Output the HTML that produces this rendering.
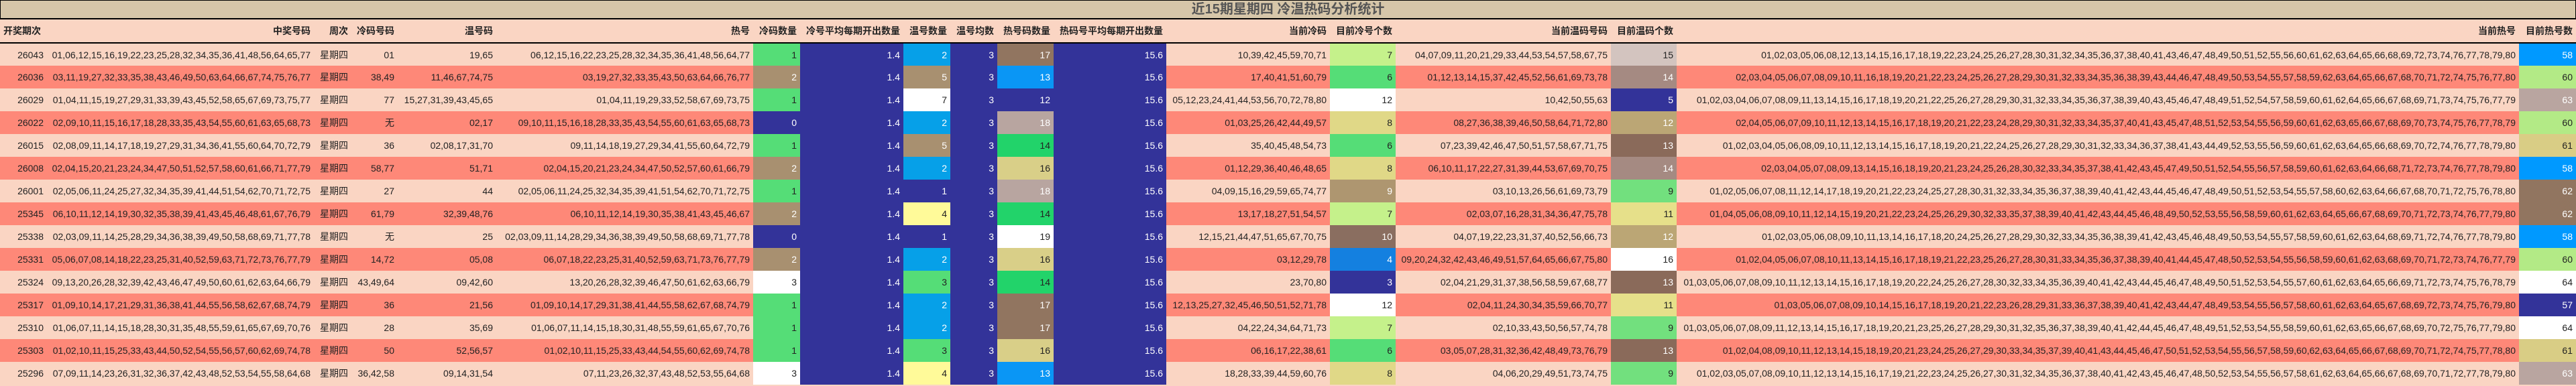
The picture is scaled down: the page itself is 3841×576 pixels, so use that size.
<!DOCTYPE html>
<html><head><meta charset="utf-8">
<style>
html,body{margin:0;padding:0;background:#fad5c3;}
body{width:3841px;height:576px;overflow:hidden;font-family:"Liberation Sans","Noto Sans CJK SC",sans-serif;font-size:14px;color:#222;}
.title{height:26px;background:#d6c6a9;border:1px solid #000;border-bottom:2px solid #000;text-align:center;font-size:20px;font-weight:bold;color:#555;line-height:26px;box-sizing:content-box;width:3839px;}
table{border-collapse:collapse;table-layout:fixed;width:3841px;}
td,th{padding:0 5px;text-align:right;white-space:nowrap;overflow:hidden;height:34px;box-sizing:border-box;}
th{height:35px;font-weight:bold;background:#fad5c3;border-bottom:2px solid #000;}
tr.a td{background:#fad5c3;}
tr.b td{background:#fe8878;}
tr td.nv{background:#333399;color:#fff;}
tr td.gr{background:#55dd77;}
tr td.tn{background:#a89070;color:#fff;}
tr td.bl{background:#06a0e8;color:#fff;}
tr td.bl2{background:#0a96f5;color:#fff;}
tr td.br{background:#917560;color:#fff;}
tr td.gp{background:#b8a5a0;color:#fff;}
tr td.g2{background:#22d36a;}
tr td.kh{background:#d9cf88;}
tr td.ye{background:#fffa99;}
tr td.wh{background:#fff;}
tr td.lg{background:#c5f18b;}
tr td.k2{background:#e0d887;}
tr td.t2{background:#ae9670;color:#fff;}
tr td.b3{background:#8a6e60;color:#fff;}
tr td.bb{background:#1480e0;color:#fff;}
tr td.p15{background:#d3c4bf;}
tr td.p14{background:#a58a82;color:#fff;}
tr td.p12{background:#bba675;color:#fff;}
tr td.p13{background:#8a6a5a;color:#fff;}
tr td.p9{background:#72e07e;}
tr td.p11{background:#e6e08a;}
tr td.h58{background:#0099ff;color:#fff;}
tr td.h60{background:#b3ea86;}
tr td.h63{background:#b9a5a0;color:#fff;}
tr td.h61{background:#d9cd85;}
tr td.h62{background:#917560;color:#fff;}
</style></head><body>
<div class="title">近15期星期四 冷温热码分析统计</div>
<table>
<colgroup>
<col style="width:70px"><col style="width:398px"><col style="width:56px"><col style="width:69px"><col style="width:147px"><col style="width:383px"><col style="width:70px"><col style="width:154px"><col style="width:70px"><col style="width:70px"><col style="width:84px"><col style="width:168px"><col style="width:244px"><col style="width:98px"><col style="width:321px"><col style="width:98px"><col style="width:1256px"><col style="width:85px">
</colgroup>
<tr><th style="text-align:left">开奖期次</th><th>中奖号码</th><th>周次</th><th>冷码号码</th><th>温号码</th><th>热号</th><th>冷码数量</th><th>冷号平均每期开出数量</th><th>温号数量</th><th>温号均数</th><th>热号码数量</th><th>热码号平均每期开出数量</th><th>当前冷码</th><th>目前冷号个数</th><th>当前温码号码</th><th>目前温码个数</th><th>当前热号</th><th>目前热号数</th></tr>
<tr class="a"><td>26043</td><td>01,06,12,15,16,19,22,23,25,28,32,34,35,36,41,48,56,64,65,77</td><td>星期四</td><td>01</td><td>19,65</td><td>06,12,15,16,22,23,25,28,32,34,35,36,41,48,56,64,77</td><td class="gr">1</td><td class="nv">1.4</td><td class="bl">2</td><td class="nv">3</td><td class="br">17</td><td class="nv">15.6</td><td>10,39,42,45,59,70,71</td><td class="lg">7</td><td>04,07,09,11,20,21,29,33,44,53,54,57,58,67,75</td><td class="p15">15</td><td>01,02,03,05,06,08,12,13,14,15,16,17,18,19,22,23,24,25,26,27,28,30,31,32,34,35,36,37,38,40,41,43,46,47,48,49,50,51,52,55,56,60,61,62,63,64,65,66,68,69,72,73,74,76,77,78,79,80</td><td class="h58">58</td></tr>
<tr class="b"><td>26036</td><td>03,11,19,27,32,33,35,38,43,46,49,50,63,64,66,67,74,75,76,77</td><td>星期四</td><td>38,49</td><td>11,46,67,74,75</td><td>03,19,27,32,33,35,43,50,63,64,66,76,77</td><td class="tn">2</td><td class="nv">1.4</td><td class="tn">5</td><td class="nv">3</td><td class="bl2">13</td><td class="nv">15.6</td><td>17,40,41,51,60,79</td><td class="gr">6</td><td>01,12,13,14,15,37,42,45,52,56,61,69,73,78</td><td class="p14">14</td><td>02,03,04,05,06,07,08,09,10,11,16,18,19,20,21,22,23,24,25,26,27,28,29,30,31,32,33,34,35,36,38,39,43,44,46,47,48,49,50,53,54,55,57,58,59,62,63,64,65,66,67,68,70,71,72,74,75,76,77,80</td><td class="h60">60</td></tr>
<tr class="a"><td>26029</td><td>01,04,11,15,19,27,29,31,33,39,43,45,52,58,65,67,69,73,75,77</td><td>星期四</td><td>77</td><td>15,27,31,39,43,45,65</td><td>01,04,11,19,29,33,52,58,67,69,73,75</td><td class="gr">1</td><td class="nv">1.4</td><td class="wh">7</td><td class="nv">3</td><td class="nv">12</td><td class="nv">15.6</td><td>05,12,23,24,41,44,53,56,70,72,78,80</td><td class="wh">12</td><td>10,42,50,55,63</td><td class="nv">5</td><td>01,02,03,04,06,07,08,09,11,13,14,15,16,17,18,19,20,21,22,25,26,27,28,29,30,31,32,33,34,35,36,37,38,39,40,43,45,46,47,48,49,51,52,54,57,58,59,60,61,62,64,65,66,67,68,69,71,73,74,75,76,77,79</td><td class="h63">63</td></tr>
<tr class="b"><td>26022</td><td>02,09,10,11,15,16,17,18,28,33,35,43,54,55,60,61,63,65,68,73</td><td>星期四</td><td>无</td><td>02,17</td><td>09,10,11,15,16,18,28,33,35,43,54,55,60,61,63,65,68,73</td><td class="nv">0</td><td class="nv">1.4</td><td class="bl">2</td><td class="nv">3</td><td class="gp">18</td><td class="nv">15.6</td><td>01,03,25,26,42,44,49,57</td><td class="k2">8</td><td>08,27,36,38,39,46,50,58,64,71,72,80</td><td class="p12">12</td><td>02,04,05,06,07,09,10,11,12,13,14,15,16,17,18,19,20,21,22,23,24,28,29,30,31,32,33,34,35,37,40,41,43,45,47,48,51,52,53,54,55,56,59,60,61,62,63,65,66,67,68,69,70,73,74,75,76,77,78,79</td><td class="h60">60</td></tr>
<tr class="a"><td>26015</td><td>02,08,09,11,14,17,18,19,27,29,31,34,36,41,55,60,64,70,72,79</td><td>星期四</td><td>36</td><td>02,08,17,31,70</td><td>09,11,14,18,19,27,29,34,41,55,60,64,72,79</td><td class="gr">1</td><td class="nv">1.4</td><td class="tn">5</td><td class="nv">3</td><td class="g2">14</td><td class="nv">15.6</td><td>35,40,45,48,54,73</td><td class="gr">6</td><td>07,23,39,42,46,47,50,51,57,58,67,71,75</td><td class="p13">13</td><td>01,02,03,04,05,06,08,09,10,11,12,13,14,15,16,17,18,19,20,21,22,24,25,26,27,28,29,30,31,32,33,34,36,37,38,41,43,44,49,52,53,55,56,59,60,61,62,63,64,65,66,68,69,70,72,74,76,77,78,79,80</td><td class="h61">61</td></tr>
<tr class="b"><td>26008</td><td>02,04,15,20,21,23,24,34,47,50,51,52,57,58,60,61,66,71,77,79</td><td>星期四</td><td>58,77</td><td>51,71</td><td>02,04,15,20,21,23,24,34,47,50,52,57,60,61,66,79</td><td class="tn">2</td><td class="nv">1.4</td><td class="bl">2</td><td class="nv">3</td><td class="kh">16</td><td class="nv">15.6</td><td>01,12,29,36,40,46,48,65</td><td class="k2">8</td><td>06,10,11,17,22,27,31,39,44,53,67,69,70,75</td><td class="p14">14</td><td>02,03,04,05,07,08,09,13,14,15,16,18,19,20,21,23,24,25,26,28,30,32,33,34,35,37,38,41,42,43,45,47,49,50,51,52,54,55,56,57,58,59,60,61,62,63,64,66,68,71,72,73,74,76,77,78,79,80</td><td class="h58">58</td></tr>
<tr class="a"><td>26001</td><td>02,05,06,11,24,25,27,32,34,35,39,41,44,51,54,62,70,71,72,75</td><td>星期四</td><td>27</td><td>44</td><td>02,05,06,11,24,25,32,34,35,39,41,51,54,62,70,71,72,75</td><td class="gr">1</td><td class="nv">1.4</td><td class="nv">1</td><td class="nv">3</td><td class="gp">18</td><td class="nv">15.6</td><td>04,09,15,16,29,59,65,74,77</td><td class="t2">9</td><td>03,10,13,26,56,61,69,73,79</td><td class="p9">9</td><td>01,02,05,06,07,08,11,12,14,17,18,19,20,21,22,23,24,25,27,28,30,31,32,33,34,35,36,37,38,39,40,41,42,43,44,45,46,47,48,49,50,51,52,53,54,55,57,58,60,62,63,64,66,67,68,70,71,72,75,76,78,80</td><td class="h62">62</td></tr>
<tr class="b"><td>25345</td><td>06,10,11,12,14,19,30,32,35,38,39,41,43,45,46,48,61,67,76,79</td><td>星期四</td><td>61,79</td><td>32,39,48,76</td><td>06,10,11,12,14,19,30,35,38,41,43,45,46,67</td><td class="tn">2</td><td class="nv">1.4</td><td class="ye">4</td><td class="nv">3</td><td class="g2">14</td><td class="nv">15.6</td><td>13,17,18,27,51,54,57</td><td class="lg">7</td><td>02,03,07,16,28,31,34,36,47,75,78</td><td class="p11">11</td><td>01,04,05,06,08,09,10,11,12,14,15,19,20,21,22,23,24,25,26,29,30,32,33,35,37,38,39,40,41,42,43,44,45,46,48,49,50,52,53,55,56,58,59,60,61,62,63,64,65,66,67,68,69,70,71,72,73,74,76,77,79,80</td><td class="h62">62</td></tr>
<tr class="a"><td>25338</td><td>02,03,09,11,14,25,28,29,34,36,38,39,49,50,58,68,69,71,77,78</td><td>星期四</td><td>无</td><td>25</td><td>02,03,09,11,14,28,29,34,36,38,39,49,50,58,68,69,71,77,78</td><td class="nv">0</td><td class="nv">1.4</td><td class="nv">1</td><td class="nv">3</td><td class="wh">19</td><td class="nv">15.6</td><td>12,15,21,44,47,51,65,67,70,75</td><td class="b3">10</td><td>04,07,19,22,23,31,37,40,52,56,66,73</td><td class="p12">12</td><td>01,02,03,05,06,08,09,10,11,13,14,16,17,18,20,24,25,26,27,28,29,30,32,33,34,35,36,38,39,41,42,43,45,46,48,49,50,53,54,55,57,58,59,60,61,62,63,64,68,69,71,72,74,76,77,78,79,80</td><td class="h58">58</td></tr>
<tr class="b"><td>25331</td><td>05,06,07,08,14,18,22,23,25,31,40,52,59,63,71,72,73,76,77,79</td><td>星期四</td><td>14,72</td><td>05,08</td><td>06,07,18,22,23,25,31,40,52,59,63,71,73,76,77,79</td><td class="tn">2</td><td class="nv">1.4</td><td class="bl">2</td><td class="nv">3</td><td class="kh">16</td><td class="nv">15.6</td><td>03,12,29,78</td><td class="bb">4</td><td>09,20,24,32,42,43,46,49,51,57,64,65,66,67,75,80</td><td class="wh">16</td><td>01,02,04,05,06,07,08,10,11,13,14,15,16,17,18,19,21,22,23,25,26,27,28,30,31,33,34,35,36,37,38,39,40,41,44,45,47,48,50,52,53,54,55,56,58,59,60,61,62,63,68,69,70,71,72,73,74,76,77,79</td><td class="h60">60</td></tr>
<tr class="a"><td>25324</td><td>09,13,20,26,28,32,39,42,43,46,47,49,50,60,61,62,63,64,66,79</td><td>星期四</td><td>43,49,64</td><td>09,42,60</td><td>13,20,26,28,32,39,46,47,50,61,62,63,66,79</td><td class="wh">3</td><td class="nv">1.4</td><td class="gr">3</td><td class="nv">3</td><td class="g2">14</td><td class="nv">15.6</td><td>23,70,80</td><td class="nv">3</td><td>02,04,21,29,31,37,38,56,58,59,67,68,77</td><td class="p13">13</td><td>01,03,05,06,07,08,09,10,11,12,13,14,15,16,17,18,19,20,22,24,25,26,27,28,30,32,33,34,35,36,39,40,41,42,43,44,45,46,47,48,49,50,51,52,53,54,55,57,60,61,62,63,64,65,66,69,71,72,73,74,75,76,78,79</td><td class="wh">64</td></tr>
<tr class="b"><td>25317</td><td>01,09,10,14,17,21,29,31,36,38,41,44,55,56,58,62,67,68,74,79</td><td>星期四</td><td>36</td><td>21,56</td><td>01,09,10,14,17,29,31,38,41,44,55,58,62,67,68,74,79</td><td class="gr">1</td><td class="nv">1.4</td><td class="bl">2</td><td class="nv">3</td><td class="br">17</td><td class="nv">15.6</td><td>12,13,25,27,32,45,46,50,51,52,71,78</td><td class="wh">12</td><td>02,04,11,24,30,34,35,59,66,70,77</td><td class="p11">11</td><td>01,03,05,06,07,08,09,10,14,15,16,17,18,19,20,21,22,23,26,28,29,31,33,36,37,38,39,40,41,42,43,44,47,48,49,53,54,55,56,57,58,60,61,62,63,64,65,67,68,69,72,73,74,75,76,79,80</td><td class="nv">57</td></tr>
<tr class="a"><td>25310</td><td>01,06,07,11,14,15,18,28,30,31,35,48,55,59,61,65,67,69,70,76</td><td>星期四</td><td>28</td><td>35,69</td><td>01,06,07,11,14,15,18,30,31,48,55,59,61,65,67,70,76</td><td class="gr">1</td><td class="nv">1.4</td><td class="bl">2</td><td class="nv">3</td><td class="br">17</td><td class="nv">15.6</td><td>04,22,24,34,64,71,73</td><td class="lg">7</td><td>02,10,33,43,50,56,57,74,78</td><td class="p9">9</td><td>01,03,05,06,07,08,09,11,12,13,14,15,16,17,18,19,20,21,23,25,26,27,28,29,30,31,32,35,36,37,38,39,40,41,42,44,45,46,47,48,49,51,52,53,54,55,58,59,60,61,62,63,65,66,67,68,69,70,72,75,76,77,79,80</td><td class="wh">64</td></tr>
<tr class="b"><td>25303</td><td>01,02,10,11,15,25,33,43,44,50,52,54,55,56,57,60,62,69,74,78</td><td>星期四</td><td>50</td><td>52,56,57</td><td>01,02,10,11,15,25,33,43,44,54,55,60,62,69,74,78</td><td class="gr">1</td><td class="nv">1.4</td><td class="gr">3</td><td class="nv">3</td><td class="kh">16</td><td class="nv">15.6</td><td>06,16,17,22,38,61</td><td class="gr">6</td><td>03,05,07,28,31,32,36,42,48,49,73,76,79</td><td class="p13">13</td><td>01,02,04,08,09,10,11,12,13,14,15,18,19,20,21,23,24,25,26,27,29,30,33,34,35,37,39,40,41,43,44,45,46,47,50,51,52,53,54,55,56,57,58,59,60,62,63,64,65,66,67,68,69,70,71,72,74,75,77,78,80</td><td class="h61">61</td></tr>
<tr class="a"><td>25296</td><td>07,09,11,14,23,26,31,32,36,37,42,43,48,52,53,54,55,58,64,68</td><td>星期四</td><td>36,42,58</td><td>09,14,31,54</td><td>07,11,23,26,32,37,43,48,52,53,55,64,68</td><td class="wh">3</td><td class="nv">1.4</td><td class="ye">4</td><td class="nv">3</td><td class="bl2">13</td><td class="nv">15.6</td><td>18,28,33,39,44,59,60,76</td><td class="k2">8</td><td>04,06,20,29,49,51,73,74,75</td><td class="p9">9</td><td>01,02,03,05,07,08,09,10,11,12,13,14,15,16,17,19,21,22,23,24,25,26,27,30,31,32,34,35,36,37,38,40,41,42,43,45,46,47,48,50,52,53,54,55,56,57,58,61,62,63,64,65,66,67,68,69,70,71,72,77,78,79,80</td><td class="h63">63</td></tr>
</table>
</body></html>
